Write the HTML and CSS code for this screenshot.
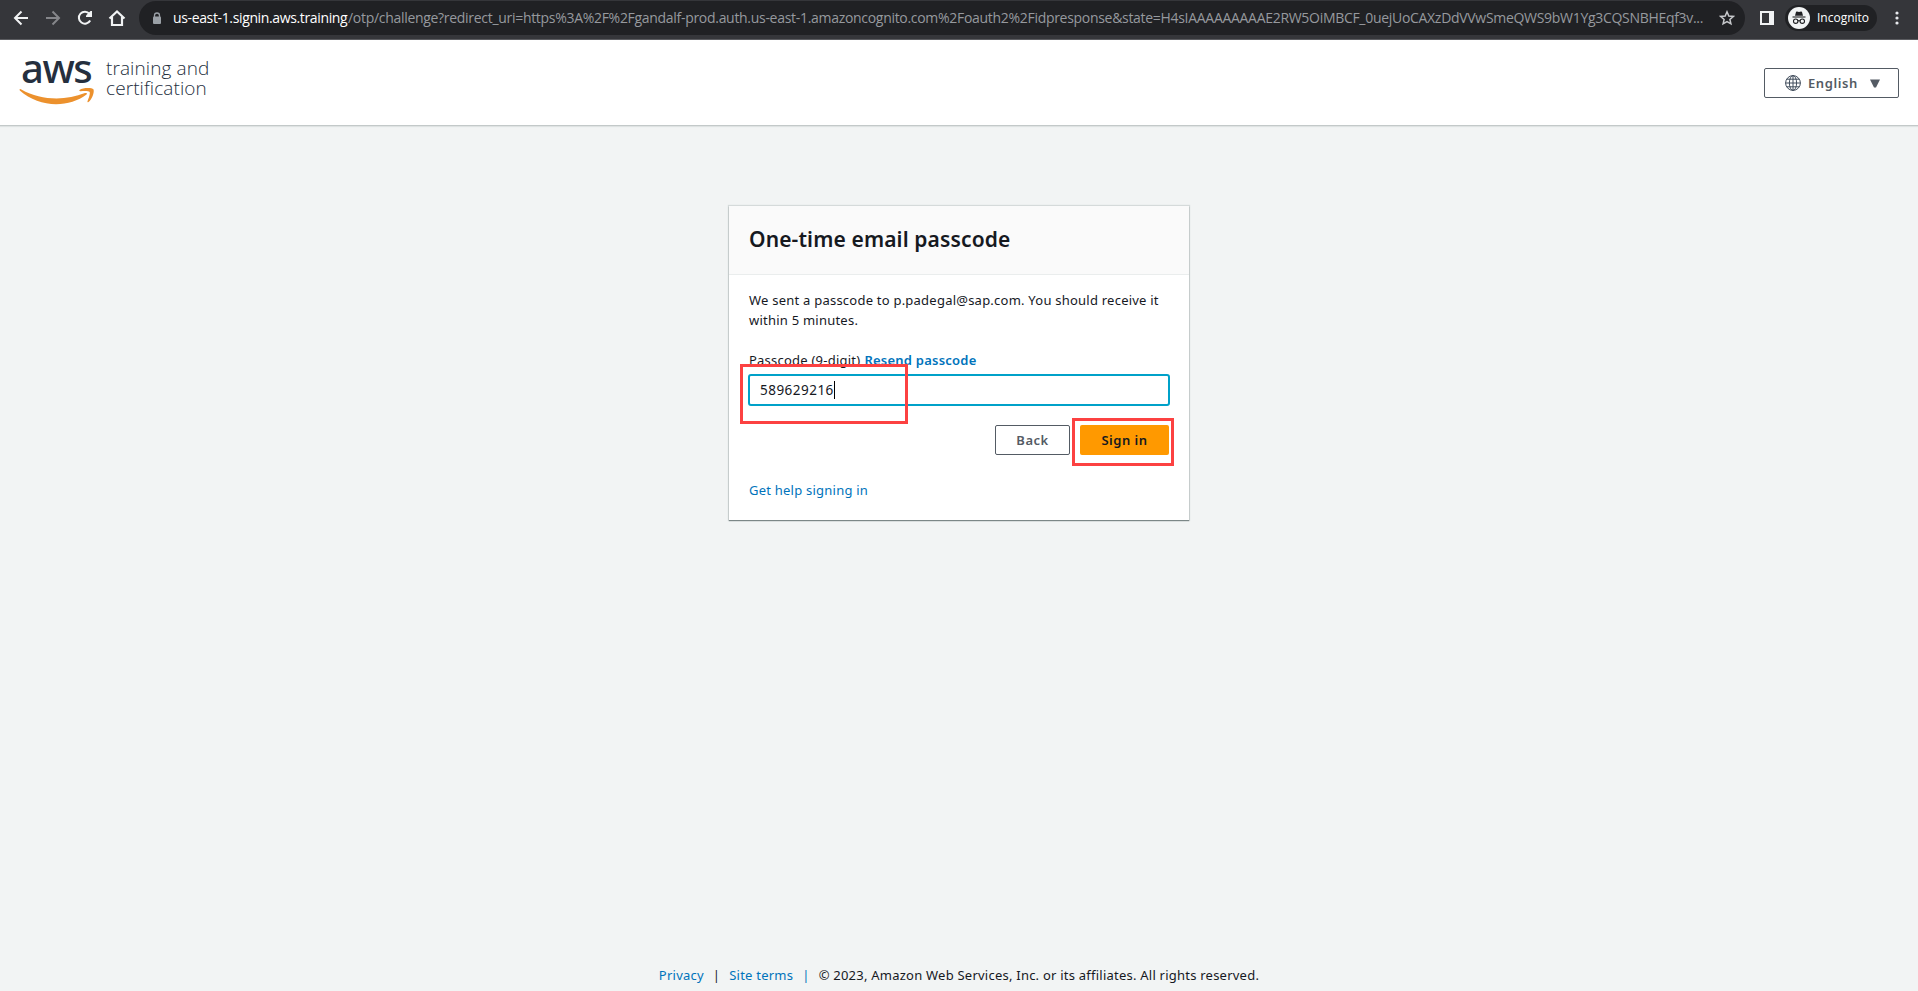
FILE: index.html
```html
<!DOCTYPE html>
<html lang="en">
<head>
<meta charset="utf-8">
<title>One-time email passcode</title>
<link rel="stylesheet" href="styles.css">
</head>
<body>
<div class="toolbar">
  <svg class="nav-icons" width="139" height="36" fill="none" stroke="#f1f3f4" stroke-width="2">
    <path d="M28 18H15.500M21.500 11.500L15 18L21.500 24.500"/>
    <path d="M46 18H58.500M52.500 11.500L59 18L52.500 24.500" stroke="#85868a"/>
    <path d="M90.200 20.500A6 6 0 1 1 89.500 13.800"/>
    <path d="M92 11V17H86V15.500L90.500 11Z" fill="#f1f3f4" stroke="none"/>
    <path d="M109.500 18.500L117 11.500L124.500 18.500M112 17V25H122V17" stroke-width="2.200"/>
  </svg>
  <div class="omnibox">
    <svg class="lock" width="10" height="13" viewBox="0 0 10 13"><path d="M2.500 5V3.500a2.500 2.500 0 0 1 5 0V5" fill="none" stroke="#9aa0a6" stroke-width="1.300"/><rect x="1" y="4.500" width="8" height="7.500" rx="1" fill="#9aa0a6"/></svg>
    <span class="host">us-east-1.signin.aws.training</span><span class="path">/otp/challenge?redirect_uri=https%3A%2F%2Fgandalf-prod.auth.us-east-1.amazoncognito.com%2Foauth2%2Fidpresponse&amp;state=H4sIAAAAAAAAAE2RW5OiMBCF_0uejUoCAXzDdVVwSmeQWS9bW1Yg3CQSNBHEqf3v...</span>
    <svg class="star" width="16" height="16" viewBox="0 0 16 16"><path d="M8 1.800L9.800 6L14.300 6.400L10.900 9.400L11.900 13.800L8 11.500L4.100 13.800L5.100 9.400L1.700 6.400L6.200 6Z" fill="none" stroke="#c7c9cc" stroke-width="1.500"/></svg>
  </div>
  <svg class="panel" width="14" height="14"><path fill="#f1f3f4" fill-rule="evenodd" d="M0 0H14V14H0ZM2 2V12H9V2Z"/></svg>
  <div class="incognito">
    <svg width="22" height="22" viewBox="0 0 22 22"><circle cx="11" cy="11" r="11" fill="#f1f3f4"/><path d="M7 8.800L8 5Q8.200 4.400 9 4.600L11 5L13 4.600Q13.800 4.400 14 5L15 8.800Z" fill="#202124"/><path d="M4.500 10H17.500" stroke="#202124" stroke-width="1.100"/><g fill="none" stroke="#202124" stroke-width="1.100"><circle cx="7.700" cy="14.200" r="2.200"/><circle cx="14.300" cy="14.200" r="2.200"/><path d="M9.900 14Q11 13.300 12.100 14"/></g></svg>
    <span>Incognito</span>
  </div>
  <svg class="more" width="4" height="14" fill="#e8eaed"><circle cx="2" cy="2" r="1.600"/><circle cx="2" cy="7" r="1.600"/><circle cx="2" cy="12" r="1.600"/></svg>
</div>
<header class="header">
  <div class="logo">
    <div class="mark">
      <span class="aws">aws</span>
      <svg class="smile" width="76" height="18" viewBox="0 0 76 18" fill="#ec912d"><path d="M0.500 1.500Q1 .5 2.300 1.500C22 12.500 46 13 66 5Q69 4.500 67.500 6.500C50 20 20 20 .8 2.600Z"/><path d="M60.500 2C64 -.5 73 -.3 74.400 1.200C75.500 3 74 10.500 69.500 14Q68 14.800 68.600 13C70 9.500 71.500 5 70.500 3.700C69.500 2.600 65 2.800 61.500 3.200Q59.800 3.200 60.500 2Z"/></svg>
    </div>
    <div class="tagline">training and<br>certification</div>
  </div>
  <button class="language">
    <svg width="16" height="16" viewBox="0 0 16 16" fill="none" stroke="#414d5c" stroke-width="1"><circle cx="8" cy="8" r="7.400"/><ellipse cx="8" cy="8" rx="3.600" ry="7.400"/><path d="M8 .6V15.400M.6 8H15.400M1.800 4.200H14.200M1.800 11.800H14.200"/></svg>
    <span>English</span>
    <svg width="10" height="9"><path d="M0 .5H10L6 8.500H4Z" fill="#545b64"/></svg>
  </button>
</header>
<main class="main">
  <section class="card">
    <h1>One-time email passcode</h1>
    <div class="content">
      <p>We sent a passcode to p.padegal@sap.com. You should receive it<br>within 5 minutes.</p>
      <div class="label"><span>Passcode (9-digit)</span><a class="resend">Resend passcode</a></div>
      <div class="field"><span class="code">589629216</span><i class="caret"></i><div class="mark-box mark-code"></div></div>
      <div class="actions"><button class="back">Back</button><button class="signin">Sign in<i class="mark-box mark-sign"></i></button></div>
      <a class="help">Get help signing in</a>
    </div>
  </section>
</main>
<footer class="footer"><a>Privacy</a><span class="bar">|</span><a>Site terms</a><span class="bar bar-blue">|</span><span>© 2023, Amazon Web Services, Inc. or its affiliates. All rights reserved.</span></footer>
</body>
</html>
```
FILE: styles.css
```css
* { box-sizing: border-box; }
body {
  margin: 0;
  height: 991px;
  display: flex;
  flex-direction: column;
  overflow: hidden;
  background: #f2f4f4;
  color: #16191f;
  font: 13px/20px "Noto Sans", sans-serif;
  letter-spacing: .23px;
  white-space: nowrap;
}
button { font: inherit; padding: 0; background: #fff; }
svg { display: block; flex: none; }
a { color: #0073bb; }

.toolbar {
  height: 40px;
  flex: none;
  display: flex;
  align-items: center;
  padding-bottom: 3px;
  background: #35363a;
  border-bottom: 1px solid #5b5c60;
}
.omnibox {
  width: 1606px;
  height: 34px;
  display: flex;
  align-items: center;
  padding-left: 13px;
  border-radius: 17px;
  background: #202124;
  color: #96999e;
  font: 14px/20px "Open Sans", sans-serif;
}
.lock { margin-right: 11px; }
.host { width: 175px; color: #fff; letter-spacing: -.36px; }
.path { width: 1360px; letter-spacing: -.3px; }
.star { margin-left: 11px; }
.panel { margin-left: 15px; }
.incognito {
  width: 92px;
  height: 26px;
  margin-left: 11px;
  display: flex;
  align-items: center;
  gap: 7px;
  padding-left: 3px;
  border-radius: 13px;
  background: #202124;
  color: #fff;
  font: 12px/20px "Open Sans", sans-serif;
  letter-spacing: 0;
}
.more { margin-left: 18px; }

.header {
  height: 86px;
  flex: none;
  display: flex;
  justify-content: space-between;
  padding: 0 19px;
  background: #fff;
  border-bottom: 1px solid #c3c9c9;
  box-shadow: 0 1px 1px #dfe3e3;
}
.logo { display: flex; color: #252f3e; }
.mark { width: 87px; padding-top: 9px; }
.aws {
  display: block;
  height: 39px;
  padding-left: 2px;
  font: 500 40px/37px "Noto Sans", sans-serif;
  letter-spacing: -1.5px;
}
.tagline {
  padding-top: 18px;
  font: 300 19px/20px "Open Sans", sans-serif;
  letter-spacing: .1px;
}
.language {
  width: 135px;
  height: 30px;
  margin-top: 28px;
  display: flex;
  align-items: center;
  padding-left: 20px;
  border: 1px solid #545b64;
  border-radius: 2px;
  color: #545b64;
  font-weight: 600;
  letter-spacing: .6px;
}
.language span { width: 50px; margin: 0 12px 0 7px; text-align: left; }

.main { flex: 1; padding-top: 80px; }
.card {
  width: 460px;
  height: 314px;
  margin: 0 auto;
  background: #fff;
  box-shadow: 0 1px 1px #7c8787, 0 0 1px 1px #d5dada;
}
.card h1 {
  height: 69px;
  margin: 0;
  padding: 0 20px;
  background: #fafafa;
  border-bottom: 1px solid #eaeded;
  font: 600 21px/67px "Noto Sans", sans-serif;
  letter-spacing: .13px;
}
.content { padding: 15px 20px; }
.content p { margin: 0 0 20px; }
.label { display: flex; gap: 4px; }
.resend { font-weight: 600; }
.field {
  position: relative;
  width: 422px;
  height: 32px;
  margin: 4px -1px 19px;
  display: flex;
  align-items: center;
  padding-left: 10px;
  border: 2px solid #00a1c9;
  border-radius: 3px;
}
.code { font-size: 13.5px; letter-spacing: .48px; }
.caret { width: 1px; height: 18px; background: #000; }
.mark-box { position: absolute; border: 3px solid #fc4141; }
.mark-code { left: -10px; top: -12px; width: 168px; height: 60px; }
.mark-sign { left: -8px; top: -7px; width: 102px; height: 48px; }
.actions { display: flex; justify-content: flex-end; gap: 10px; height: 30px; margin-bottom: 25px; }
.actions button { border-radius: 2px; font-weight: 600; letter-spacing: .5px; }
.back { width: 75px; border: 1px solid #545b64; color: #545b64; }
.signin { position: relative; width: 89px; border: 0; background: #f90; color: #16191f; }

.footer { height: 26px; display: flex; justify-content: center; }
.bar { margin: 0 9px; }
.bar-blue { color: #0073bb; }
```
